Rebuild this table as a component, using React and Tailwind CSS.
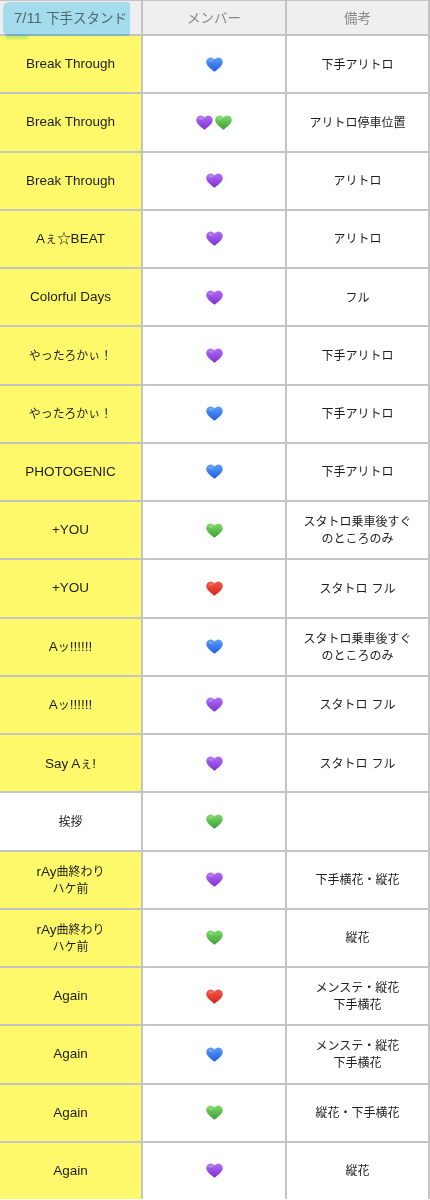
import React from "react";

const COLORS = {
  blue: ["#5c9df9", "#1f5ee0"],
  purple: ["#b36ef2", "#7c30d4"],
  green: ["#7fda66", "#3d9f36"],
  red: ["#f65a4c", "#cf2419"],
};

function Heart({ c }) {
  const id = React.useId();
  const [a, b] = COLORS[c];
  return (
    <svg width="17" height="15" viewBox="0 0 24 21" className="block">
      <defs>
        <linearGradient id={id} x1="0" y1="0" x2="0" y2="1">
          <stop offset="0" stopColor={a} />
          <stop offset="1" stopColor={b} />
        </linearGradient>
      </defs>
      <path
        d="M12 20.6C12 20.6 2.6 14.9.7 9.2-.6 5.3 1.9.8 6.2.6c2.6-.1 4.6 1.3 5.8 3.2C13.2 1.9 15.2.5 17.8.6c4.3.2 6.8 4.7 5.5 8.6C21.4 14.9 12 20.6 12 20.6z"
        fill={`url(#${id})`}
      />
      <ellipse cx="6.8" cy="5" rx="3.2" ry="1.9" fill="#ffffff" opacity="0.22" />
    </svg>
  );
}

const rows = [
  ["Break Through", ["blue"], "下手アリトロ"],
  ["Break Through", ["purple", "green"], "アリトロ停車位置"],
  ["Break Through", ["purple"], "アリトロ"],
  ["Aぇ☆BEAT", ["purple"], "アリトロ"],
  ["Colorful Days", ["purple"], "フル"],
  ["やったろかぃ！", ["purple"], "下手アリトロ"],
  ["やったろかぃ！", ["blue"], "下手アリトロ"],
  ["PHOTOGENIC", ["blue"], "下手アリトロ"],
  ["+YOU", ["green"], "スタトロ乗車後すぐ\nのところのみ"],
  ["+YOU", ["red"], "スタトロ フル"],
  ["Aッ!!!!!!", ["blue"], "スタトロ乗車後すぐ\nのところのみ"],
  ["Aッ!!!!!!", ["purple"], "スタトロ フル"],
  ["Say Aぇ!", ["purple"], "スタトロ フル"],
  ["挨拶", ["green"], "", true],
  ["rAy曲終わり\nハケ前", ["purple"], "下手横花・縦花"],
  ["rAy曲終わり\nハケ前", ["green"], "縦花"],
  ["Again", ["red"], "メンステ・縦花\n下手横花"],
  ["Again", ["blue"], "メンステ・縦花\n下手横花"],
  ["Again", ["green"], "縦花・下手横花"],
  ["Again", ["purple"], "縦花"],
];

const CJK = /([\u3000-\u30ff\u4e00-\u9fff\uff01-\uff60]+)/;

function Txt({ s, big }) {
  const lines = s.split("\n");
  return (
    <div className="flex flex-col items-center leading-[16px]">
      {lines.map((ln, i) => (
        <div key={i} className="whitespace-pre">
          {ln.split(CJK).map((part, j) =>
            CJK.test(part) ? (
              <span
                key={j}
                className={big ? "text-[13.5px]" : "text-[12px]"}
                style={{ fontFamily: '"Noto Sans CJK JP", sans-serif' }}
              >
                {part}
              </span>
            ) : (
              <span key={j}>{part}</span>
            )
          )}
        </div>
      ))}
    </div>
  );
}

export default function App() {
  return (
    <div
      className="w-[430px] bg-[#c4c4c4] pt-[1px] pr-[2px] grid grid-cols-[141px_142px_141px] gap-[2px] text-[13.5px] text-[#1e1e1e]"
      style={{ fontFamily: '"Liberation Sans", "Noto Sans CJK JP", sans-serif' }}
    >
      <div className="relative h-[33px] bg-[#efefef] flex items-center justify-center text-[15px] text-[#707070]">
        <Txt s="7/11 下手スタンド" big />
        <div className="absolute left-[3px] top-[1px] w-[127px] h-[34px] rounded-l-[6px] rounded-r-[3px] bg-[#b0ebfd] mix-blend-multiply z-10" />
        <div className="absolute left-[5px] top-[34px] w-[24px] h-[4px] rounded-full bg-[#c4f0fa] mix-blend-multiply blur-[1px] z-10" />
      </div>
      <div className="h-[33px] bg-[#efefef] flex items-center justify-center text-[#8a8a8a]">
        <Txt s="メンバー" big />
      </div>
      <div className="h-[33px] bg-[#efefef] flex items-center justify-center text-[#8a8a8a]">
        <Txt s="備考" big />
      </div>
      {rows.map(([song, hearts, note, white], i) => (
        <React.Fragment key={i}>
          <div
            className={
              white
                ? "h-[56.25px] bg-white flex items-center justify-center"
                : "h-[56.25px] bg-[#fef86b] flex items-center justify-center"
            }
          >
            <Txt s={song} />
          </div>
          <div className="h-[56.25px] bg-white flex items-center justify-center gap-[2px]">
            {hearts.map((h, k) => (
              <Heart key={k} c={h} />
            ))}
          </div>
          <div className="h-[56.25px] bg-white flex items-center justify-center">
            <Txt s={note} />
          </div>
        </React.Fragment>
      ))}
    </div>
  );
}
